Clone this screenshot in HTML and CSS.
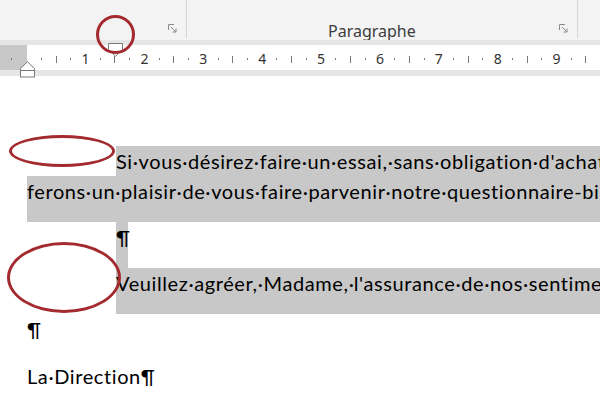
FILE: index.html
```html
<!DOCTYPE html>
<html lang="fr">
<head>
    <meta charset="UTF-8">
    <meta name="viewport" content="width=device-width, initial-scale=1.0">
    <title>Retrait de première ligne</title>
    <link rel="stylesheet" href="styles.css">
</head>
<body>
    <header class="ribbon">
        <div class="group group-police">
            <span class="launcher">
                <svg width="9" height="9" viewBox="0 0 9 9"><path d="M0.5 6V0.5H6" fill="none" stroke="#8a8a8a"/><path d="M3 3L8 8M8 4.5V8H4.5" fill="none" stroke="#8a8a8a"/></svg>
            </span>
        </div>
        <div class="group group-para">
            <span class="group-label">Paragraphe</span>
            <span class="launcher">
                <svg width="9" height="9" viewBox="0 0 9 9"><path d="M0.5 6V0.5H6" fill="none" stroke="#8a8a8a"/><path d="M3 3L8 8M8 4.5V8H4.5" fill="none" stroke="#8a8a8a"/></svg>
            </span>
        </div>
    </header>

    <div class="ruler-bar">
        <div class="ruler">
            <div class="scale">
                <span class="d"></span><span></span>
                <span class="d"></span><span class="h"></span><span class="d"></span><span class="n">1</span>
                <span class="d"></span><span class="h"></span><span class="d"></span><span class="n">2</span>
                <span class="d"></span><span class="h"></span><span class="d"></span><span class="n">3</span>
                <span class="d"></span><span class="h"></span><span class="d"></span><span class="n">4</span>
                <span class="d"></span><span class="h"></span><span class="d"></span><span class="n">5</span>
                <span class="d"></span><span class="h"></span><span class="d"></span><span class="n">6</span>
                <span class="d"></span><span class="h"></span><span class="d"></span><span class="n">7</span>
                <span class="d"></span><span class="h"></span><span class="d"></span><span class="n">8</span>
                <span class="d"></span><span class="h"></span><span class="d"></span><span class="n">9</span>
                <span class="d"></span><span class="h"></span><span class="d"></span>
            </div>
        </div>
        <!-- retrait de première ligne -->
        <svg class="marker marker-first" width="15" height="14" viewBox="0 0 15 14">
            <path d="M0.5 0.5H14.5V6.5L7.5 13.2L0.5 6.5Z" fill="#fff" stroke="#7a7a7a"/>
        </svg>
        <!-- retrait gauche -->
        <svg class="marker marker-left" width="15" height="17" viewBox="0 0 15 17">
            <path d="M7.5 0.8L14.5 7.5V9.5H0.5V7.5Z" fill="#fff" stroke="#7a7a7a"/>
            <rect x="0.5" y="9.5" width="14" height="6.5" fill="#fff" stroke="#7a7a7a"/>
        </svg>
    </div>

    <main class="doc">
        <p class="para sel">
            <span class="line indent">Si·vous·désirez·faire·un·essai,·sans·obligation·d'achat,·nous</span>
            <span class="line last">ferons·un·plaisir·de·vous·faire·parvenir·notre·questionnaire-bilan.¶</span>
        </p>
        <p class="para sel empty">
            <span class="line indent last">¶</span>
        </p>
        <p class="para sel">
            <span class="line indent last">Veuillez·agréer,·Madame,·l'assurance·de·nos·sentiments·distingués.¶</span>
        </p>
        <p class="para">
            <span class="line">¶</span>
        </p>
        <p class="para">
            <span class="line">La·Direction¶</span>
        </p>
    </main>

    <!-- annotations -->
    <span class="mark mark-ruler"></span>
    <span class="mark mark-line1"></span>
    <span class="mark mark-line3"></span>
</body>
</html>
```

FILE: styles.css
```css
* {
    margin: 0;
    padding: 0;
    box-sizing: border-box;
}

body {
    width: 600px;
    height: 394px;
    overflow: hidden;
    position: relative;
    background-color: #fff;
    font-family: 'Noto Sans', 'Open Sans', sans-serif;
}

/* Ribbon */
.ribbon {
    display: flex;
    height: 40px;
    background-color: #f3f3f3;
}

.group {
    display: flex;
    align-items: flex-end;
    height: 38px;
    border-right: 1px solid #d6d6d6;
}

.group-police {
    width: 187px;
    justify-content: flex-end;
    padding: 0 9px 5px 0;
}

.group-para {
    width: 391px;
    justify-content: space-between;
    padding: 0 9px 5px 141px;
}

.group-label {
    font-size: 16px;
    line-height: 20px;
    color: #3c3c3c;
    margin-bottom: -8px;
}

.launcher {
    display: block;
    width: 9px;
    height: 9px;
}

.launcher svg {
    display: block;
}

/* Ruler */
.ruler-bar {
    position: relative;
    background-color: #e6e6e6;
    padding: 5px 0 6px;
}

.ruler {
    height: 25px;
    background: linear-gradient(to right, #c8c8c8 27px, #fff 27px);
    overflow: hidden;
}

.scale {
    display: flex;
    height: 25px;
    padding-left: 4.6px;
}

.scale span {
    flex: 0 0 14.72px;
    display: flex;
    align-items: center;
    justify-content: center;
    font-size: 14px;
    color: #333;
}

.scale .d::before {
    content: "";
    width: 1px;
    height: 2px;
    margin-top: 3px;
    background-color: #777;
}

.scale .h::before {
    content: "";
    width: 1px;
    height: 7px;
    margin-top: 3px;
    background-color: #777;
}

.scale .n {
    padding-top: 2px;
}

.marker {
    position: absolute;
    display: block;
}

.marker-first {
    left: 108px;
    top: 3px;
}

.marker-left {
    left: 20px;
    top: 21px;
}

/* Document */
.doc {
    padding: 70px 0 0 27px;
    font-family: 'Lato', 'Liberation Sans', sans-serif;
    font-size: 20px;
    letter-spacing: 0.6px;
    color: #000;
}

.para {
    margin-bottom: 17px;
}

.line {
    display: block;
    height: 30px;
    line-height: 30px;
    white-space: nowrap;
}

.indent {
    margin-left: 89px;
}

.para.sel {
    margin-bottom: 0;
}

.sel .line {
    background-color: #c8c8c8;
}

.sel .last {
    height: 46px;
    padding-bottom: 16px;
}

.empty .line {
    width: 12px;
}

/* Red annotation circles */
.mark {
    position: absolute;
    border: 3px solid #a32a2e;
    border-radius: 50%;
}

.mark-ruler {
    left: 96px;
    top: 15px;
    width: 39px;
    height: 39px;
}

.mark-line1 {
    left: 9px;
    top: 135px;
    width: 106px;
    height: 32px;
}

.mark-line3 {
    left: 7px;
    top: 242px;
    width: 114px;
    height: 71px;
}
```
